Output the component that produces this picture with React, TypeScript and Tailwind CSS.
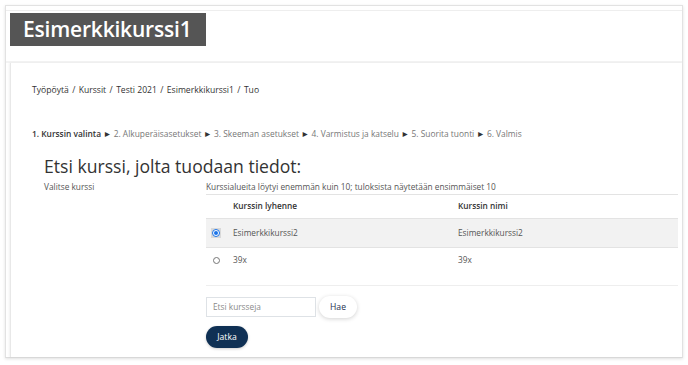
import React from "react";

const font = { fontFamily: '"Open Sans", "Liberation Sans", sans-serif' };

function Radio({ checked }: { checked?: boolean }) {
  if (checked) {
    return (
      <span className="flex h-[10px] w-[10px] items-center justify-center bg-[#d9d9d9]">
        <span className="flex h-[8px] w-[8px] items-center justify-center rounded-full border border-[#1a73e8] bg-white">
          <span className="h-[4px] w-[4px] rounded-full bg-[#1a73e8]" />
        </span>
      </span>
    );
  }
  return <span className="h-[7px] w-[7px] rounded-full border border-[#767676] bg-white" />;
}

export default function App() {
  const steps = [
    "2. Alkuperäisasetukset",
    "3. Skeeman asetukset",
    "4. Varmistus ja katselu",
    "5. Suorita tuonti",
    "6. Valmis",
  ];
  const crumbs = ["Työpöytä", "Kurssit", "Testi 2021", "Esimerkkikurssi1", "Tuo"];
  return (
    <div className="h-[365px] w-[688px] bg-white px-[5px] pt-[5px]" style={font}>
      <div className="flex h-[353px] flex-col border-x border-t border-[#e2e2e2] border-b border-b-[#dcdcdc] shadow-[0_1px_3px_rgba(0,0,0,0.12)]">
        <div className="mt-[4px] h-[51px] border-t border-[#eeeeee] bg-white pl-[4px]">
          <div className="mt-[2px] flex h-[33px] w-[196px] items-center bg-[#555555] pl-[13px]">
            <span className="text-[21px] font-semibold leading-none tracking-[-0.2px] text-white">Esimerkkikurssi1</span>
          </div>
        </div>
        <div className="flex flex-1 flex-col border-t-[2px] border-[#f3f3f3] pl-[4px]">
          <div className="flex-1 border-l border-[#e8e8e8] bg-white pl-[21px] pt-[21px] shadow-[-1px_0_2px_rgba(0,0,0,0.06)]">
            <div className="flex h-[12px] text-[8.6px] leading-[12px] text-[#333]">
              {crumbs.map((c, i) => (
                <span key={c} className="flex">
                  {i > 0 && <span className="mx-[3.4px]">/</span>}
                  <span>{c}</span>
                </span>
              ))}
            </div>
            <div className="mt-[32px] h-[12px] text-[8.4px] leading-[12px] text-[#777]">
              <span className="font-semibold text-[#333]">1. Kurssin valinta</span>
              {steps.map((s) => (
                <span key={s}>
                  {" "}
                  <span className="text-[#333]">►</span> {s}
                </span>
              ))}
            </div>
            <div className="pl-[12px]">
              <h2 className="mt-[15px] h-[22px] text-[17.6px] leading-[22px] text-[#333]">
                Etsi kurssi, jolta tuodaan tiedot:
              </h2>
              <div className="mt-[3px] flex">
                <div className="w-[162px] pt-[1px] text-[8.3px] leading-[12px] text-[#555]">Valitse kurssi</div>
                <div className="w-[472px]">
                  <div className="h-[12px] pt-[1px] text-[8.3px] leading-[12px] text-[#555]">
                    Kurssialueita löytyi enemmän kuin 10; tuloksista näytetään ensimmäiset 10
                  </div>
                  <div className="mt-[2px] border-t border-[#e3e3e3] text-[8.3px] text-[#333]">
                    <div className="flex h-[24px] items-center border-b border-[#e3e3e3] font-semibold">
                      <div className="w-[20px]" />
                      <div className="w-[225px] pl-[7px]">Kurssin lyhenne</div>
                      <div className="pl-[7px]">Kurssin nimi</div>
                    </div>
                    <div className="flex h-[29px] items-center border-b border-[#e3e3e3] bg-[#f2f2f2] text-[#555]">
                      <div className="flex w-[20px] justify-center">
                        <Radio checked />
                      </div>
                      <div className="w-[225px] pl-[7px]">Esimerkkikurssi2</div>
                      <div className="pl-[7px]">Esimerkkikurssi2</div>
                    </div>
                    <div className="flex h-[25px] items-center text-[#555]">
                      <div className="flex w-[20px] justify-center">
                        <Radio />
                      </div>
                      <div className="w-[225px] pl-[7px]">39x</div>
                      <div className="pl-[7px]">39x</div>
                    </div>
                  </div>
                  <div className="mt-[12px] border-t border-[#eeeeee]" />
                  <div className="mt-[10px] flex items-center gap-[3px]">
                    <div className="flex h-[20px] w-[110px] items-center border border-[#dee2e6] bg-white pl-[6px] text-[8.3px] text-[#8a8a8a]">
                      Etsi kursseja
                    </div>
                    <div className="flex h-[22px] w-[38px] items-center justify-center rounded-full bg-white text-[8.6px] text-[#1d2f4f] shadow-[0_1px_4px_rgba(0,0,0,0.18)]">
                      Hae
                    </div>
                  </div>
                  <div className="mt-[8px] flex h-[22px] w-[42px] items-center justify-center rounded-full bg-[#0f3054] text-[8.6px] text-white shadow-[0_1px_3px_rgba(0,0,0,0.2)]">
                    Jatka
                  </div>
                </div>
              </div>
            </div>
          </div>
        </div>
      </div>
    </div>
  );
}
